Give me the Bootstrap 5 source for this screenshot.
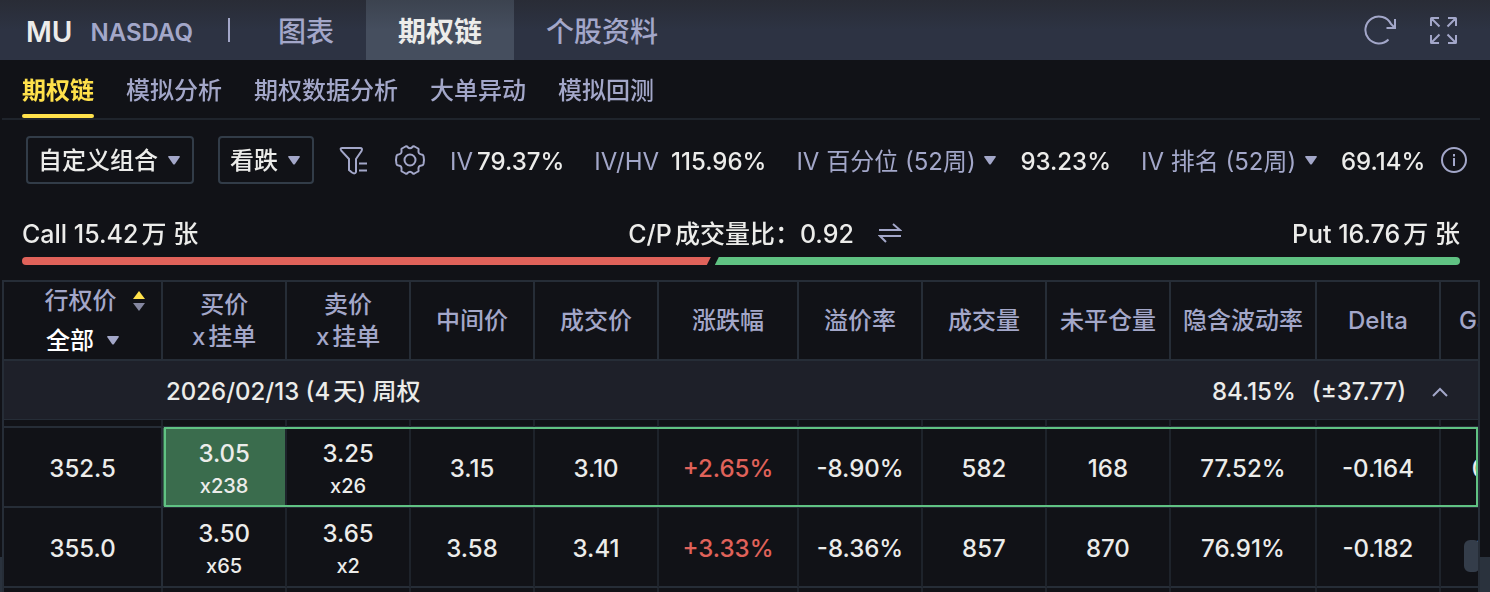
<!DOCTYPE html>
<html lang="zh-CN" data-bs-theme="dark">
<head>
<meta charset="utf-8">
<meta name="viewport" content="width=device-width, initial-scale=1">
<title>MU 期权链</title>
<link href="https://cdn.jsdelivr.net/npm/bootstrap@5.3.0/dist/css/bootstrap.min.css" rel="stylesheet">
<style>
:root{--bg:#111217;--line:#262d37;--muted:#a3a7c9;--ink:#ececea;--yellow:#ffe14b;--red:#e0625a;--green:#60c283}
body{background:var(--bg);color:var(--ink);font-family:Inter,"Noto Sans CJK SC",sans-serif;font-size:24px;font-weight:500;line-height:32px;text-autospace:normal;overflow:hidden}
a{color:inherit;text-decoration:none}
svg{display:block;flex:none;fill:none;stroke:var(--muted);stroke-width:2}
.tone,.pick.tone{color:var(--muted)}
.topbar{height:60px;padding:0 28px 0 26px;background:linear-gradient(#292c36,#2d3343 50%)}
.topbar .symbol{font-size:28px;font-weight:600;padding-top:4px}
.topbar .market{font-weight:600;padding-top:6px;margin-left:18px}
.topbar .rule{width:2px;height:24px;margin:0 16px 0 35px;background:var(--muted)}
.topbar .tools{gap:20px}
.toptab{font-size:28px;height:60px;display:flex;align-items:center;padding:4px 32px 0;color:var(--muted)}
.toptab.active{font-weight:700;color:var(--ink);background:linear-gradient(#3c434f,#454e5e 50%)}
.subnav{height:60px;gap:32px;padding-left:20px;margin:0 10px 0 2px;border-bottom:2px solid #1f242c;color:var(--muted)}
.subnav a{height:58px;line-height:62px}
.subnav a.active{color:var(--yellow);font-weight:700;position:relative}
.subnav a.active::after{content:"";position:absolute;left:0;right:0;bottom:0;height:4px;border-radius:2px;background:var(--yellow)}
.iconbtn{flex:none;border:0;background:none;padding:0}
.pick{flex:none;appearance:none;border:0;padding:0 25px 0 0;margin:0;color:inherit;font:inherit;line-height:32px;outline-offset:2px;
background:transparent url("data:image/svg+xml,%3Csvg xmlns='http://www.w3.org/2000/svg' width='12' height='9'%3E%3Cpath d='M1 0H11Q12.500 0 11.500 1.500L7 8Q6 9 5 8L.5 1.500Q-.5 0 1 0Z' fill='%23a3a7c9'/%3E%3C/svg%3E") no-repeat right 0 center}
.boxed{height:48px;border:2px solid #323c48;border-radius:4px;padding:2px 0 0 10px;background-position:right 12px center}
.boxed.wide{width:168px}
.boxed.slim{width:96px}
.filters{padding:16px 20px 0 26px;height:64px}
.filters>span,.filters>.pick:not(.boxed){padding-top:3px}
.filters>.pick:not(.boxed){padding-right:20px}
.filters>.tone{font-weight:400}
.filters .group-start{margin-left:30px}
.filters .near{margin-left:12px}
.volume{font-size:25px;margin:34px 30px 0 22px}
.meter-bar{height:8px;margin:7px 30px 0 22px}
.call-part{background:var(--red);border-radius:4px 0 0 4px;clip-path:polygon(0 0,100% 0,calc(100% - 4px) 100%,0 100%)}
.put-part{background:var(--green);border-radius:0 4px 4px 0;flex:1;margin-left:4px;clip-path:polygon(4px 0,100% 0,100% 100%,0 100%)}
.chain-wrap{margin:15px 10px 0 2px;position:relative;background:var(--bg);border:solid var(--line);border-width:2px 2px 0;overflow:hidden}
.chain{width:100%;table-layout:fixed;border-collapse:separate;border-spacing:0;text-align:center}
.chain th,.chain td{border:solid var(--line);border-width:0 2px 2px 0;padding:0;font-weight:500;overflow:hidden;white-space:nowrap}
.chain tr>:last-child{border-right:0}
.chain td{border-right-color:#1e232b}
.chain thead th{height:79px;color:var(--muted)}
.chain tbody th,.chain tbody td{height:80px;padding-top:4px}
.chain tbody small{display:block;font-size:20px;font-weight:500;line-height:28px;padding-top:2px}
.chain .expiry th{height:59px;background:#1e2029;border-bottom-width:1px;padding:4px 28px 0 162px}
.chain .lead-in td{height:8px;padding:0}
.chain .up{color:var(--red)}
.sorter{padding-left:24px}
.spill{width:124px}
.hit{position:relative}
.hit td:last-child::after{content:"";position:absolute;top:-1px;bottom:1px;left:160px;right:0;border:2px solid var(--green);pointer-events:none}
.hit .bid{background:#3a6c4d}
.thumb{position:absolute;right:-2px;top:258px;width:16px;height:32px;border-radius:6px;background:#343d4a}
.dock{position:fixed;left:0;right:0;bottom:0;height:35px;background:#2a323d;z-index:-1}
</style>
</head>
<body>
<header class="topbar d-flex align-items-center text-nowrap">
  <span class="symbol">MU</span>
  <span class="market tone">NASDAQ</span>
  <span class="rule"></span>
  <nav class="d-flex">
    <a class="toptab" href="#">图表</a>
    <a class="toptab active" href="#">期权链</a>
    <a class="toptab" href="#">个股资料</a>
  </nav>
  <div class="tools ms-auto d-flex align-items-center">
    <button class="iconbtn" aria-label="刷新"><svg width="40" height="32" viewBox="0 0 40 32"><path d="M24.500 25.500A13.500 13.500 0 1 1 27 10L30 13M31 5v9H22.500"/></svg></button>
    <button class="iconbtn" aria-label="全屏"><svg width="38" height="32" viewBox="0 0 38 32"><path d="M15 4H7.500Q7 4 7 4.500V12M7 4L15.500 12.500M24 4h7.500Q32 4 32 4.500V12M32 4L23.500 12.500M7 21v7.500Q7 29 7.500 29H15M7 29l8.500-8.500M32 21v7.500Q32 29 31.500 29H24M32 29l-8.500-8.500"/></svg></button>
  </div>
</header>
<nav class="subnav d-flex text-nowrap">
  <a class="active" href="#">期权链</a>
  <a href="#">模拟分析</a>
  <a href="#">期权数据分析</a>
  <a href="#">大单异动</a>
  <a href="#">模拟回测</a>
</nav>
<section class="filters d-flex align-items-center text-nowrap">
  <select class="pick boxed wide" aria-label="组合"><option>自定义组合</option></select>
  <select class="pick boxed slim ms-4" aria-label="方向"><option>看跌</option></select>
  <button class="iconbtn ms-4" aria-label="筛选"><svg width="32" height="32" viewBox="0 0 32 32"><path d="M4 4H22Q25 4 23.500 7L18 15V28Q17 30.500 14 28.500L11 26V15L3.500 7Q1.500 4 4 4ZM21 19.500h8M21 26.500h8"/></svg></button>
  <button class="iconbtn ms-4" aria-label="设置"><svg width="32" height="32" viewBox="0 0 32 32"><circle cx="16" cy="16" r="5.500"/><path d="M11.500 2.500Q13 2 13.500 3Q16 5.500 18.500 3Q19 2 20.500 2.500L24 4.500Q25 5 24.500 6.500Q24 10 27.500 10.500Q29 10.500 29.500 12Q30.500 16 29.500 20Q29 21.500 27.500 21.500Q24 22 24.500 25.500Q25 27 24 27.500L20.500 29.500Q19 30 18.500 29Q16 26.500 13.500 29Q13 30 11.500 29.500L8 27.500Q7 27 7.500 25.500Q8 22 4.500 21.500Q3 21.500 2.500 20Q1.500 16 2.500 12Q3 10.500 4.500 10.500Q8 10 7.500 6.500Q7 5 8 4.500Z" stroke-linejoin="round"/></svg></button>
  <span class="tone ms-4">IV</span><span class="ms-1">79.37%</span>
  <span class="tone group-start">IV/HV</span><span class="near">115.96%</span>
  <select class="pick tone group-start" aria-label="IV 百分位周期"><option>IV 百分位 (52周)</option></select><span class="ms-4">93.23%</span>
  <select class="pick tone group-start" aria-label="IV 排名周期"><option>IV 排名 (52周)</option></select><span class="ms-4">69.14%</span>
  <button class="iconbtn ms-3" aria-label="说明"><svg width="26" height="26" viewBox="0 0 26 26"><circle cx="13" cy="13" r="12"/><path d="M13 11v8M13 7v2.500"/></svg></button>
</section>
<section class="volume d-flex text-nowrap">
  <span class="col">Call 15.42万 张</span>
  <span class="col-auto">C/P成交量比：0.92</span>
  <span class="col d-flex align-items-center justify-content-between"><button class="iconbtn ms-4" aria-label="切换"><svg width="24" height="22" viewBox="0 0 24 22"><path d="M1 7H22L15 1M23 13H2L8 19"/></svg></button><span>Put 16.76万 张</span></span>
</section>
<div class="meter-bar d-flex"><div class="call-part" style="width:47.900%"></div><div class="put-part"></div></div>
<main class="chain-wrap">
<table class="chain">
  <colgroup><col style="width:10.800%"><col style="width:8.410%"><col style="width:8.410%"><col style="width:8.410%"><col style="width:8.410%"><col style="width:9.500%"><col style="width:8.410%"><col style="width:8.410%"><col style="width:8.410%"><col style="width:9.910%"><col style="width:8.410%"><col></colgroup>
  <thead><tr>
    <th><div class="sorter d-flex align-items-center justify-content-center gap-3">行权价<svg width="12" height="20" viewBox="0 0 12 20"><path d="M6 0L12 8H0Z" fill="#ffe14b" stroke="none"/><path d="M0 12H12L6 20Z" fill="#8587a0" stroke="none"/></svg></div>
      <select class="pick text-white mt-2" aria-label="行权价范围"><option>全部</option></select></th>
    <th>买价<br>x挂单</th><th>卖价<br>x挂单</th><th>中间价</th><th>成交价</th><th>涨跌幅</th><th>溢价率</th><th>成交量</th><th>未平仓量</th><th>隐含波动率</th><th>Delta</th><th><div class="spill">Gamma</div></th>
  </tr></thead>
  <tbody>
    <tr class="expiry"><th colspan="12"><div class="d-flex align-items-center"><span>2026/02/13 (4天) 周权</span><span class="ms-auto">84.15%</span><span class="ms-3">(±37.77)</span><button class="iconbtn ms-4" aria-label="收起"><svg width="20" height="12" viewBox="0 0 20 12"><path d="M3 10l7-7 7 7"/></svg></button></div></th></tr>
    <tr class="lead-in"><td></td><td></td><td></td><td></td><td></td><td></td><td></td><td></td><td></td><td></td><td></td><td></td></tr>
    <tr class="hit"><th>352.5</th><td class="bid">3.05<small>x238</small></td><td>3.25<small>x26</small></td><td>3.15</td><td>3.10</td><td class="up">+2.65%</td><td>-8.90%</td><td>582</td><td>168</td><td>77.52%</td><td>-0.164</td><td><div class="spill">0.010</div></td></tr>
    <tr><th>355.0</th><td>3.50<small>x65</small></td><td>3.65<small>x2</small></td><td>3.58</td><td>3.41</td><td class="up">+3.33%</td><td>-8.36%</td><td>857</td><td>870</td><td>76.91%</td><td>-0.182</td><td><div class="spill">0.011</div></td></tr>
    <tr class="lead-in"><td></td><td></td><td></td><td></td><td></td><td></td><td></td><td></td><td></td><td></td><td></td><td></td></tr>
  </tbody>
</table>
<div class="thumb"></div>
</main>
<div class="dock"></div>
<script src="https://cdn.jsdelivr.net/npm/bootstrap@5.3.0/dist/js/bootstrap.bundle.min.js"></script>
</body>
</html>
